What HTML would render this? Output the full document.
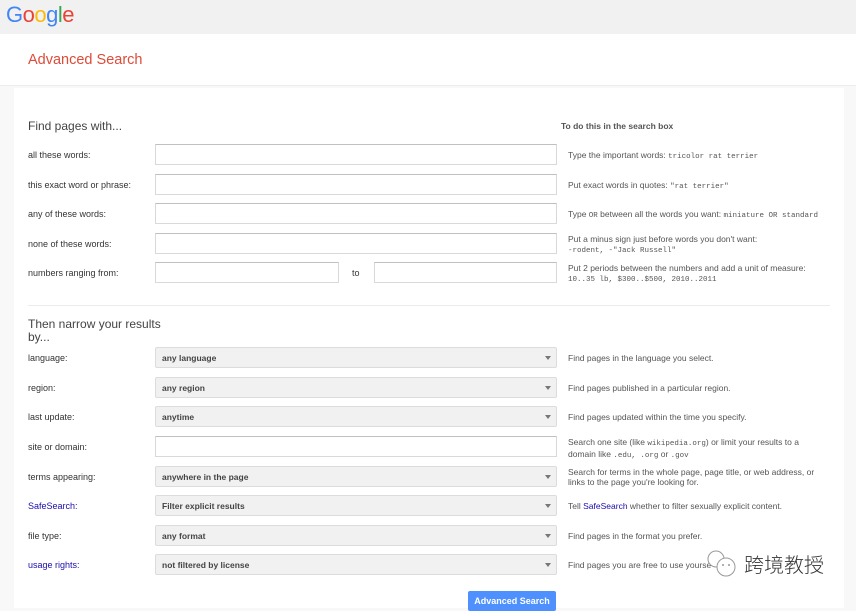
<!DOCTYPE html>
<html><head><meta charset="utf-8"><style>
*{box-sizing:border-box;margin:0;padding:0}
body{width:856px;height:600px;overflow:hidden;background:#f8f8f8;font-family:"Liberation Sans",Arial,sans-serif;position:relative;color:#222}
.a{position:absolute}
.top{left:0;top:0;width:856px;height:34px;background:#f1f1f1}
.logo{left:6px;top:2px;font-size:22px;letter-spacing:-0.5px;font-weight:normal}
.band{left:0;top:34px;width:856px;height:52px;background:#fff;border-bottom:1px solid #ececec}
.title{left:28px;top:52px;font-size:14.5px;color:#dd4b39}
.panel{left:14px;top:88px;width:830px;height:520px;background:#fff}
.h{font-size:12px;color:#444}
.lab{left:28px;font-size:9px;color:#333}
.blue{color:#1a0dab}
.inp{height:21px;border:1px solid #d9d9d9;border-top-color:#c0c0c0;background:#fff}
.sel{left:155px;width:402px;height:21px;border:1px solid #dcdcdc;background:#f1f1f1;border-radius:2px;font-size:8.5px;font-weight:bold;color:#444;padding:5px 6px}
.sel:after{content:"";position:absolute;right:5px;top:8px;border:3px solid transparent;border-top:4px solid #777}
.r{left:568px;font-size:8.5px;color:#555;line-height:10px}
.m{font-family:"Liberation Mono",monospace;font-size:7.5px}
</style></head><body>
<div class="a top"></div>
<div class="a logo"><span style="color:#4285f4">G</span><span style="color:#ea4335">o</span><span style="color:#fbbc05">o</span><span style="color:#4285f4">g</span><span style="color:#34a853">l</span><span style="color:#ea4335">e</span></div>
<div class="a band"></div>
<div class="a title">Advanced Search</div>
<div class="a panel"></div>
<div class="a h" style="left:28px;top:119px">Find pages with...</div>
<div class="a" style="left:561px;top:121px;font-size:8.5px;font-weight:bold;color:#555">To do this in the search box</div>

<div class="a lab" style="top:150px">all these words:</div>
<div class="a inp" style="left:155px;top:144px;width:402px"></div>
<div class="a r" style="top:150px">Type the important words: <span class="m">tricolor rat terrier</span></div>

<div class="a lab" style="top:180px">this exact word or phrase:</div>
<div class="a inp" style="left:155px;top:174px;width:402px"></div>
<div class="a r" style="top:180px">Put exact words in quotes: <span class="m">"rat terrier"</span></div>

<div class="a lab" style="top:209px">any of these words:</div>
<div class="a inp" style="left:155px;top:203px;width:402px"></div>
<div class="a r" style="top:209px">Type <span class="m">OR</span> between all the words you want: <span class="m">miniature OR standard</span></div>

<div class="a lab" style="top:239px">none of these words:</div>
<div class="a inp" style="left:155px;top:233px;width:402px"></div>
<div class="a r" style="top:234px">Put a minus sign just before words you don't want:<br><span class="m">-rodent, -"Jack Russell"</span></div>

<div class="a lab" style="top:268px">numbers ranging from:</div>
<div class="a inp" style="left:155px;top:262px;width:184px"></div>
<div class="a" style="left:352px;top:268px;font-size:9px;color:#333">to</div>
<div class="a inp" style="left:374px;top:262px;width:183px"></div>
<div class="a r" style="top:263px">Put 2 periods between the numbers and add a unit of measure:<br><span class="m">10..35 lb, $300..$500, 2010..2011</span></div>

<div class="a" style="left:28px;top:305px;width:802px;height:1px;background:#ebebeb"></div>
<div class="a h" style="left:28px;top:318px;line-height:13px">Then narrow your results<br>by...</div>

<div class="a lab" style="top:353px">language:</div>
<div class="a sel" style="top:347px">any language</div>
<div class="a r" style="top:353px">Find pages in the language you select.</div>

<div class="a lab" style="top:383px">region:</div>
<div class="a sel" style="top:377px">any region</div>
<div class="a r" style="top:383px">Find pages published in a particular region.</div>

<div class="a lab" style="top:412px">last update:</div>
<div class="a sel" style="top:406px">anytime</div>
<div class="a r" style="top:412px">Find pages updated within the time you specify.</div>

<div class="a lab" style="top:442px">site or domain:</div>
<div class="a inp" style="left:155px;top:436px;width:402px"></div>
<div class="a r" style="top:437px">Search one site (like <span class="m">wikipedia.org</span>) or limit your results to a<br>domain like <span class="m">.edu, .org</span> or <span class="m">.gov</span></div>

<div class="a lab" style="top:472px">terms appearing:</div>
<div class="a sel" style="top:466px">anywhere in the page</div>
<div class="a r" style="top:467px">Search for terms in the whole page, page title, or web address, or<br>links to the page you're looking for.</div>

<div class="a lab blue" style="top:501px">SafeSearch:</div>
<div class="a sel" style="top:495px">Filter explicit results</div>
<div class="a r" style="top:501px">Tell <span class="blue">SafeSearch</span> whether to filter sexually explicit content.</div>

<div class="a lab" style="top:531px">file type:</div>
<div class="a sel" style="top:525px">any format</div>
<div class="a r" style="top:531px">Find pages in the format you prefer.</div>

<div class="a lab blue" style="top:560px">usage rights:</div>
<div class="a sel" style="top:554px">not filtered by license</div>
<div class="a r" style="top:560px">Find pages you are free to use yourse</div>

<svg class="a" style="left:704px;top:549px" width="36" height="30" viewBox="0 0 36 30"><circle cx="12" cy="10" r="8" fill="#fff" stroke="#999" stroke-width="1"/><circle cx="22" cy="18" r="9" fill="#fff" stroke="#999" stroke-width="1"/><circle cx="19" cy="16" r="1" fill="#999"/><circle cx="25" cy="16" r="1" fill="#999"/></svg>
<div class="a" style="left:744px;top:549px;font-size:20px;color:#333;font-family:'Noto Sans CJK SC',sans-serif;font-weight:300">跨境教授</div>

<div class="a" style="left:468px;top:591px;width:88px;height:20px;background:#4d90fe;border-radius:2px;color:#fff;font-size:9px;font-weight:bold;text-align:center;padding-top:5px">Advanced Search</div>
</body></html>
